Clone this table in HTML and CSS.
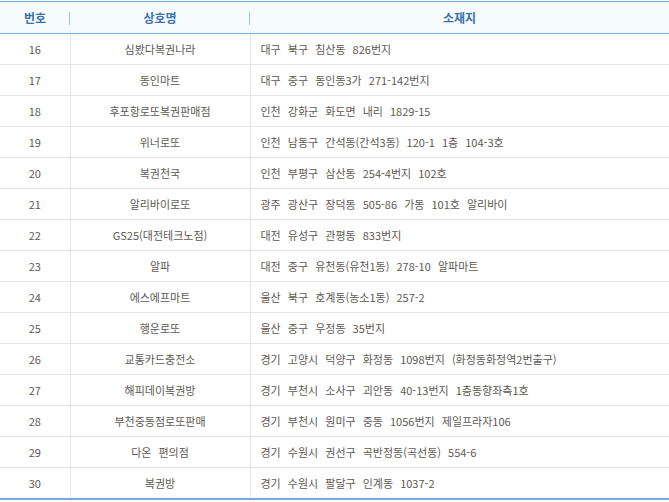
FILE: index.html
```html
<!DOCTYPE html>
<html lang="ko">
<head>
<meta charset="utf-8">
<link rel="stylesheet" href="styles.css">
</head>
<body>
<div class="wrap">
<table class="list">
<colgroup><col class="c1"><col class="c2"><col class="c3"></colgroup>
<thead>
<tr><th><span>번호</span></th><th><span>상호명</span></th><th class="last"><span>소재지</span></th></tr>
</thead>
<tbody>
<tr><td>16</td><td>심봤다복권나라</td><td class="addr">대구 북구 침산동 826번지</td></tr>
<tr><td>17</td><td>동인마트</td><td class="addr">대구 중구 동인동3가 271-142번지</td></tr>
<tr><td>18</td><td>후포항로또복권판매점</td><td class="addr">인천 강화군 화도면 내리 1829-15</td></tr>
<tr><td>19</td><td>위너로또</td><td class="addr">인천 남동구 간석동(간석3동) 120-1 1층 104-3호</td></tr>
<tr><td>20</td><td>복권천국</td><td class="addr">인천 부평구 삼산동 254-4번지 102호</td></tr>
<tr><td>21</td><td>알리바이로또</td><td class="addr">광주 광산구 장덕동 505-86 가동 101호 알리바이</td></tr>
<tr><td>22</td><td>GS25(대전테크노점)</td><td class="addr">대전 유성구 관평동 833번지</td></tr>
<tr><td>23</td><td>알파</td><td class="addr">대전 중구 유천동(유천1동) 278-10 알파마트</td></tr>
<tr><td>24</td><td>에스에프마트</td><td class="addr">울산 북구 호계동(농소1동) 257-2</td></tr>
<tr><td>25</td><td>행운로또</td><td class="addr">울산 중구 우정동 35번지</td></tr>
<tr><td>26</td><td>교통카드충전소</td><td class="addr">경기 고양시 덕양구 화정동 1098번지 (화정동화정역2번출구)</td></tr>
<tr><td>27</td><td>해피데이복권방</td><td class="addr">경기 부천시 소사구 괴안동 40-13번지 1층동향좌측1호</td></tr>
<tr><td>28</td><td>부천중동점로또판매</td><td class="addr">경기 부천시 원미구 중동 1056번지 제일프라자106</td></tr>
<tr><td>29</td><td>다온 편의점</td><td class="addr">경기 수원시 권선구 곡반정동(곡선동) 554-6</td></tr>
<tr><td>30</td><td>복권방</td><td class="addr">경기 수원시 팔달구 인계동 1037-2</td></tr>
</tbody>
</table>
</div>
</body>
</html>
```
FILE: styles.css
```css
html, body { margin: 0; padding: 0; background: #fff; }
.wrap { padding-top: 1px; }
.list {
  width: 669px;
  border-collapse: collapse;
  table-layout: fixed;
  font-family: "Noto Sans CJK KR", "Noto Sans", sans-serif;
  font-size: 11px;
  color: #5e5953;
  border-top: 1px solid #79aade;
  border-bottom: 2px solid #79aade;
}
.c1 { width: 70px; }
.c2 { width: 180px; }
.c3 { width: 419px; }
.list th {
  height: 31px;
  padding: 0;
  background: #f6fbfe;
  border-bottom: 1px solid #79aade;
  color: #3b72ab;
  font-weight: bold;
  font-size: 12px;
  text-align: center;
  position: relative;
}
.list th span { display: block; line-height: 16px; }
.list th:not(.last)::after {
  content: "";
  position: absolute;
  right: 0;
  top: 10px;
  height: 13px;
  width: 1px;
  background: #9cc3e6;
}
.list td {
  height: 30px;
  padding: 0;
  text-align: center;
  border-bottom: 1px solid #e6e6e6;
  border-right: 1px solid #e6e6e6;
  line-height: 16px;
  white-space: nowrap;
  word-spacing: 4px;
}
.list td.addr {
  text-align: left;
  padding-left: 10px;
  border-right: none;
}
.list tbody tr:last-child td { border-bottom: none; }
```
